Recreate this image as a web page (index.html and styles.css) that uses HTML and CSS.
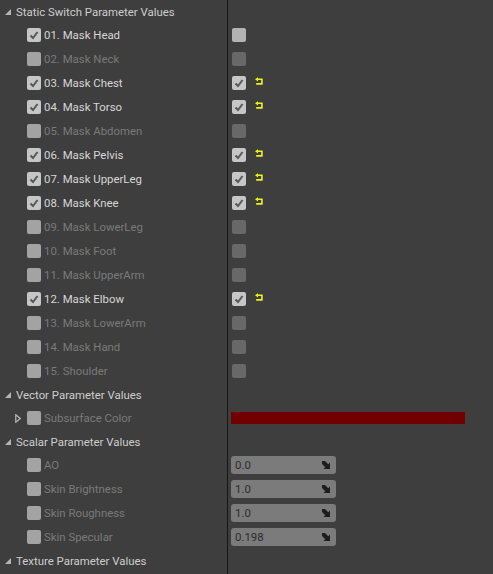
FILE: index.html
```html
<!DOCTYPE html>
<html>
<head>
<meta charset="utf-8">
<link rel="stylesheet" href="styles.css">
</head>
<body>
<div class="panel">
  <div class="row hdr">
    <div class="lc"><svg class="tri" viewBox="0 0 6 6"><polygon points="6,0 6,6 0,6"/></svg><span>Static Switch Parameter Values</span></div>
    <div class="rc"></div>
  </div>

  <div class="row on"><div class="lc"><span class="cb chk"><svg viewBox="0 0 14 14"><path d="M3.5 7.5 L6 10 L10.5 4"/></svg></span><span class="lbl">01. Mask Head</span></div><div class="rc"><span class="vcb"></span></div></div>
  <div class="row off"><div class="lc"><span class="cb"></span><span class="lbl">02. Mask Neck</span></div><div class="rc"><span class="vcb dis"></span></div></div>
  <div class="row on"><div class="lc"><span class="cb chk"><svg viewBox="0 0 14 14"><path d="M3.5 7.5 L6 10 L10.5 4"/></svg></span><span class="lbl">03. Mask Chest</span></div><div class="rc"><span class="vcb chk"><svg viewBox="0 0 14 14"><path d="M3.5 7.5 L6 10 L10.5 4"/></svg></span><svg class="reset" viewBox="0 0 8 7"><polygon points="0,1.3 3,-0.8 3,3.4"/><path d="M2.5 1.3 H6.9 V5.9 H1.2"/></svg></div></div>
  <div class="row on"><div class="lc"><span class="cb chk"><svg viewBox="0 0 14 14"><path d="M3.5 7.5 L6 10 L10.5 4"/></svg></span><span class="lbl">04. Mask Torso</span></div><div class="rc"><span class="vcb chk"><svg viewBox="0 0 14 14"><path d="M3.5 7.5 L6 10 L10.5 4"/></svg></span><svg class="reset" viewBox="0 0 8 7"><polygon points="0,1.3 3,-0.8 3,3.4"/><path d="M2.5 1.3 H6.9 V5.9 H1.2"/></svg></div></div>
  <div class="row off"><div class="lc"><span class="cb"></span><span class="lbl">05. Mask Abdomen</span></div><div class="rc"><span class="vcb dis"></span></div></div>
  <div class="row on"><div class="lc"><span class="cb chk"><svg viewBox="0 0 14 14"><path d="M3.5 7.5 L6 10 L10.5 4"/></svg></span><span class="lbl">06. Mask Pelvis</span></div><div class="rc"><span class="vcb chk"><svg viewBox="0 0 14 14"><path d="M3.5 7.5 L6 10 L10.5 4"/></svg></span><svg class="reset" viewBox="0 0 8 7"><polygon points="0,1.3 3,-0.8 3,3.4"/><path d="M2.5 1.3 H6.9 V5.9 H1.2"/></svg></div></div>
  <div class="row on"><div class="lc"><span class="cb chk"><svg viewBox="0 0 14 14"><path d="M3.5 7.5 L6 10 L10.5 4"/></svg></span><span class="lbl">07. Mask UpperLeg</span></div><div class="rc"><span class="vcb chk"><svg viewBox="0 0 14 14"><path d="M3.5 7.5 L6 10 L10.5 4"/></svg></span><svg class="reset" viewBox="0 0 8 7"><polygon points="0,1.3 3,-0.8 3,3.4"/><path d="M2.5 1.3 H6.9 V5.9 H1.2"/></svg></div></div>
  <div class="row on"><div class="lc"><span class="cb chk"><svg viewBox="0 0 14 14"><path d="M3.5 7.5 L6 10 L10.5 4"/></svg></span><span class="lbl">08. Mask Knee</span></div><div class="rc"><span class="vcb chk"><svg viewBox="0 0 14 14"><path d="M3.5 7.5 L6 10 L10.5 4"/></svg></span><svg class="reset" viewBox="0 0 8 7"><polygon points="0,1.3 3,-0.8 3,3.4"/><path d="M2.5 1.3 H6.9 V5.9 H1.2"/></svg></div></div>
  <div class="row off"><div class="lc"><span class="cb"></span><span class="lbl">09. Mask LowerLeg</span></div><div class="rc"><span class="vcb dis"></span></div></div>
  <div class="row off"><div class="lc"><span class="cb"></span><span class="lbl">10. Mask Foot</span></div><div class="rc"><span class="vcb dis"></span></div></div>
  <div class="row off"><div class="lc"><span class="cb"></span><span class="lbl">11. Mask UpperArm</span></div><div class="rc"><span class="vcb dis"></span></div></div>
  <div class="row on"><div class="lc"><span class="cb chk"><svg viewBox="0 0 14 14"><path d="M3.5 7.5 L6 10 L10.5 4"/></svg></span><span class="lbl">12. Mask Elbow</span></div><div class="rc"><span class="vcb chk"><svg viewBox="0 0 14 14"><path d="M3.5 7.5 L6 10 L10.5 4"/></svg></span><svg class="reset" viewBox="0 0 8 7"><polygon points="0,1.3 3,-0.8 3,3.4"/><path d="M2.5 1.3 H6.9 V5.9 H1.2"/></svg></div></div>
  <div class="row off"><div class="lc"><span class="cb"></span><span class="lbl">13. Mask LowerArm</span></div><div class="rc"><span class="vcb dis"></span></div></div>
  <div class="row off"><div class="lc"><span class="cb"></span><span class="lbl">14. Mask Hand</span></div><div class="rc"><span class="vcb dis"></span></div></div>
  <div class="row off"><div class="lc"><span class="cb"></span><span class="lbl">15. Shoulder</span></div><div class="rc"><span class="vcb dis"></span></div></div>

  <div class="row hdr">
    <div class="lc"><svg class="tri" viewBox="0 0 6 6"><polygon points="6,0 6,6 0,6"/></svg><span>Vector Parameter Values</span></div>
    <div class="rc"></div>
  </div>
  <div class="row off"><div class="lc vec"><svg class="exp" viewBox="0 0 6 9"><polygon points="0.75,0.75 5.25,4.5 0.75,8.25"/></svg><span class="cb"></span><span class="lbl">Subsurface Color</span></div><div class="rc"><span class="color"></span></div></div>

  <div class="row hdr">
    <div class="lc"><svg class="tri" viewBox="0 0 6 6"><polygon points="6,0 6,6 0,6"/></svg><span>Scalar Parameter Values</span></div>
    <div class="rc"></div>
  </div>
  <div class="row off"><div class="lc"><span class="cb"></span><span class="lbl">AO</span></div><div class="rc"><span class="num"><span>0.0</span><svg viewBox="0 0 8 8"><polygon points="0,0 3,0 8,5 8,8 5,8 0,3"/><polygon points="8,1.5 8,8 1.5,8"/></svg></span></div></div>
  <div class="row off"><div class="lc"><span class="cb"></span><span class="lbl">Skin Brightness</span></div><div class="rc"><span class="num"><span>1.0</span><svg viewBox="0 0 8 8"><polygon points="0,0 3,0 8,5 8,8 5,8 0,3"/><polygon points="8,1.5 8,8 1.5,8"/></svg></span></div></div>
  <div class="row off"><div class="lc"><span class="cb"></span><span class="lbl">Skin Roughness</span></div><div class="rc"><span class="num"><span>1.0</span><svg viewBox="0 0 8 8"><polygon points="0,0 3,0 8,5 8,8 5,8 0,3"/><polygon points="8,1.5 8,8 1.5,8"/></svg></span></div></div>
  <div class="row off"><div class="lc"><span class="cb"></span><span class="lbl">Skin Specular</span></div><div class="rc"><span class="num"><span>0.198</span><svg viewBox="0 0 8 8"><polygon points="0,0 3,0 8,5 8,8 5,8 0,3"/><polygon points="8,1.5 8,8 1.5,8"/></svg></span></div></div>

  <div class="row hdr">
    <div class="lc"><svg class="tri" viewBox="0 0 6 6"><polygon points="6,0 6,6 0,6"/></svg><span>Texture Parameter Values</span></div>
    <div class="rc"></div>
  </div>
  <div class="row fill"><div class="lc"></div><div class="rc"></div></div>
</div>
</body>
</html>
```
FILE: styles.css
```css
html, body {
  margin: 0;
  height: 100%;
  background: #3e3e3e;
}
body {
  font-family: Roboto, "Liberation Sans", sans-serif;
  font-size: 11.4px;
  overflow: hidden;
}
.panel {
  display: flex;
  flex-direction: column;
  height: 100%;
}
.row {
  display: grid;
  grid-template-columns: 228px 1fr;
  height: 24px;
  flex: none;
}
.row.hdr {
  height: 23px;
}
.row.fill {
  flex: 1;
}
.lc {
  box-sizing: border-box;
  border-right: 1px solid #161616;
  display: flex;
  align-items: center;
  padding-left: 27px;
  white-space: nowrap;
}
.rc {
  display: flex;
  align-items: center;
  padding-left: 3px;
}
.hdr .lc {
  padding-left: 5px;
  color: #cdcdcd;
}
.tri {
  width: 6px;
  height: 6px;
  margin-right: 5px;
  fill: #b4b4b4;
}
.cb {
  box-sizing: border-box;
  width: 14px;
  height: 14px;
  border-radius: 2px;
  background: #a3a3a3;
  margin-right: 3px;
  flex: none;
  display: flex;
}
.cb.chk {
  background: #c6c6c6;
}
.cb svg, .vcb svg {
  width: 14px;
  height: 14px;
  fill: none;
  stroke: #575757;
  stroke-width: 2;
}
.lbl {
  color: #7a7a7a;
}
.on .lbl {
  color: #d6d6d6;
}
.vcb {
  width: 14px;
  height: 14px;
  border-radius: 2px;
  background: #b3b3b3;
  margin-left: 1px;
  display: flex;
  flex: none;
}
.vcb.chk {
  background: #c6c6c6;
}
.vcb.dis {
  background: #686868;
}
.reset {
  width: 8px;
  height: 7px;
  margin-left: 9px;
  margin-top: -3px;
  overflow: visible;
}
.reset polygon {
  fill: #f2f21a;
}
.reset path {
  fill: none;
  stroke: #f2f21a;
  stroke-width: 1.6;
}
.vec {
  padding-left: 15px;
}
.exp {
  width: 6px;
  height: 9px;
  margin-right: 6px;
  fill: none;
  stroke: #b8b8b8;
  stroke-width: 1.2;
}
.color {
  width: 234px;
  height: 12px;
  background: #720000;
}
.num {
  box-sizing: border-box;
  width: 105px;
  height: 18px;
  border-radius: 3px;
  background: #7b7b7b;
  color: #2c2c2c;
  display: flex;
  align-items: center;
  justify-content: space-between;
  padding: 0 6px 0 4px;
}
.num svg {
  width: 8px;
  height: 8px;
  fill: #1e1e1e;
}
```
